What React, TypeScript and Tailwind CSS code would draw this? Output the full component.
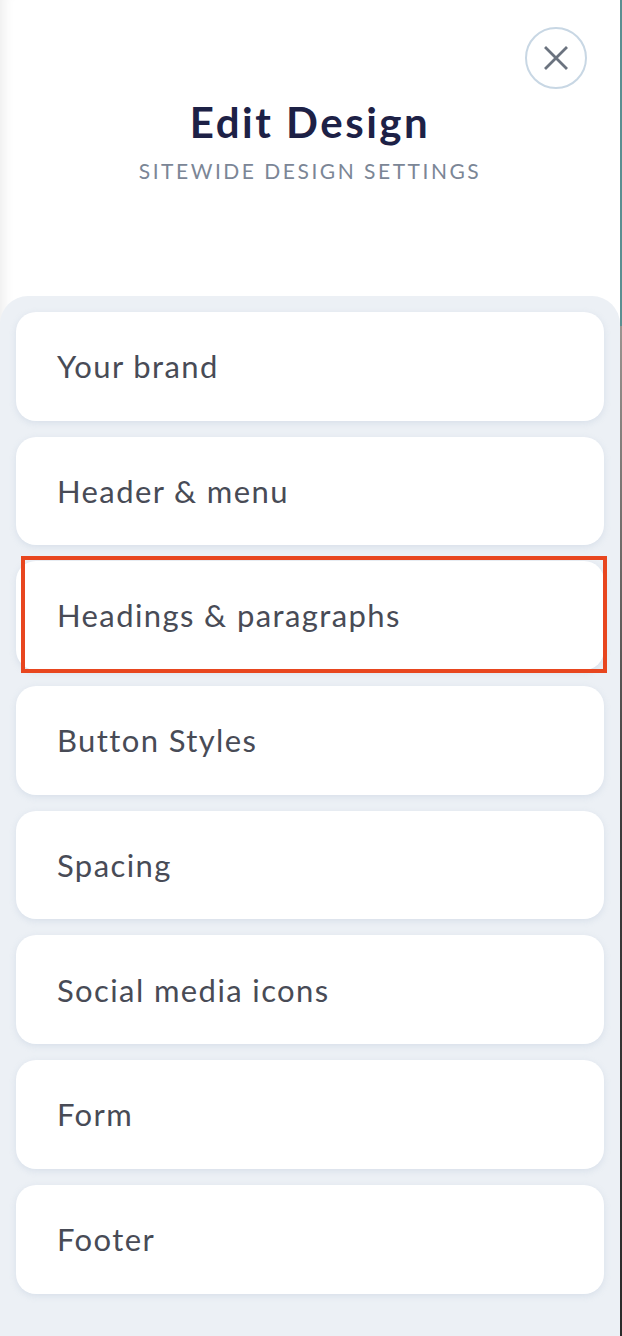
const items = [
  "Your brand",
  "Header & menu",
  "Headings & paragraphs",
  "Button Styles",
  "Spacing",
  "Social media icons",
  "Form",
  "Footer",
];

export default function App() {
  return (
    <div className="flex h-[1336px] w-[622px] overflow-hidden bg-white font-['Lato',sans-serif]">
      <div className="flex h-full w-[620px] flex-col shadow-[inset_14px_0_12px_-10px_rgba(0,0,0,0.07)]">
        <div className="relative flex h-[296px] shrink-0 flex-col items-center">
          <button className="absolute right-[33px] top-[27px] flex h-[62px] w-[62px] items-center justify-center rounded-full border-2 border-[#c8d7e4] bg-white">
            <svg width="24" height="24" viewBox="0 0 24 24" fill="none" stroke="#6b737f" strokeWidth="2.8" strokeLinecap="square">
              <path d="M2 2 L22 22 M22 2 L2 22" />
            </svg>
          </button>

          <h1 className="mt-[95px] text-[42px] font-bold leading-[54px] tracking-[0.06em] text-[#1d2146]">
            Edit Design
          </h1>
          <p className="mt-[9px] text-[21px] leading-[26px] tracking-[0.12em] text-[#7b8696]">
            SITEWIDE DESIGN SETTINGS
          </p>
        </div>

        <div className="flex grow flex-col gap-4 rounded-t-[28px] bg-[#ecf0f5] px-4 pt-4">
          {items.map((item, index) => (
            <div key={item} className="relative">
              <div className="flex h-[108.7px] items-center rounded-[20px] bg-white pl-[41px] shadow-[0_2px_6px_rgba(170,185,210,0.3)]">
                <span className="text-[31px] tracking-[0.045em] text-[#484b56]">{item}</span>
              </div>
              {index === 2 && (
                <div className="absolute -bottom-[3px] -right-[3px] -top-[5px] left-[5px] border-4 border-[#e8461f]" />
              )}
            </div>
          ))}
        </div>
      </div>

      <div className="flex h-full w-[2px] flex-col">
        <div className="h-[326px] bg-[#5a8f91]" />
        <div className="grow bg-gradient-to-b from-[#9a9490] via-[#3b3b3b] to-[#2a2a2a]" />
      </div>
    </div>
  );
}
